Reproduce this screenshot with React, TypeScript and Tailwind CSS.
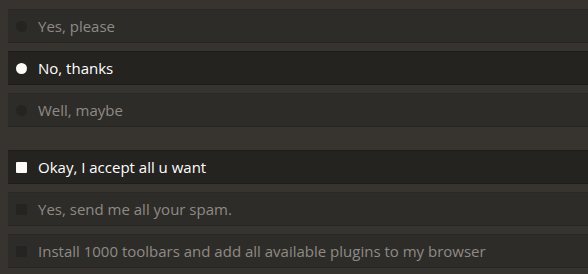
import React from 'react';

type Item = { label: string; checked: boolean };

const radios: Item[] = [
  { label: 'Yes, please', checked: false },
  { label: 'No, thanks', checked: true },
  { label: 'Well, maybe', checked: false },
];

const boxes: Item[] = [
  { label: 'Okay, I accept all u want', checked: true },
  { label: 'Yes, send me all your spam.', checked: false },
  { label: 'Install 1000 toolbars and add all available plugins to my browser', checked: false },
];

const Row = ({ item, kind }: { item: Item; kind: 'radio' | 'box' }) => {
  const mark = kind === 'radio' ? 'rounded-full w-[11px] h-[11px]' : 'rounded-[1px] w-[11px] h-[11px]';
  return (
    <div
      className={`flex items-center h-[34px] pl-[8px] border-t border-b ${
        item.checked
          ? 'bg-[#252320] border-t-[#1f1d1b] border-b-[#1f1d1b] text-white'
          : 'bg-[#2e2c29] border-t-[#2a2826] border-b-[#272523] text-[#8e8a85]'
      }`}
    >
      <span className={`${mark} shrink-0 ${item.checked ? 'bg-[#fbfbf8]' : 'bg-[#262422]'}`} />
      <span className="ml-[11px] text-[15px]">{item.label}</span>
    </div>
  );
};

export default function App() {
  return (
    <div
      className="w-[588px] h-[274px] bg-[#37342f] pl-2 pt-[9px] overflow-hidden"
      style={{ fontFamily: '"Open Sans", "Noto Sans", sans-serif' }}
    >
      <div className="flex flex-col gap-[8px]">
        {radios.map((r) => (
          <Row key={r.label} item={r} kind="radio" />
        ))}
      </div>
      <div className="flex flex-col gap-[8px] mt-[23px]">
        {boxes.map((b) => (
          <Row key={b.label} item={b} kind="box" />
        ))}
      </div>
    </div>
  );
}
